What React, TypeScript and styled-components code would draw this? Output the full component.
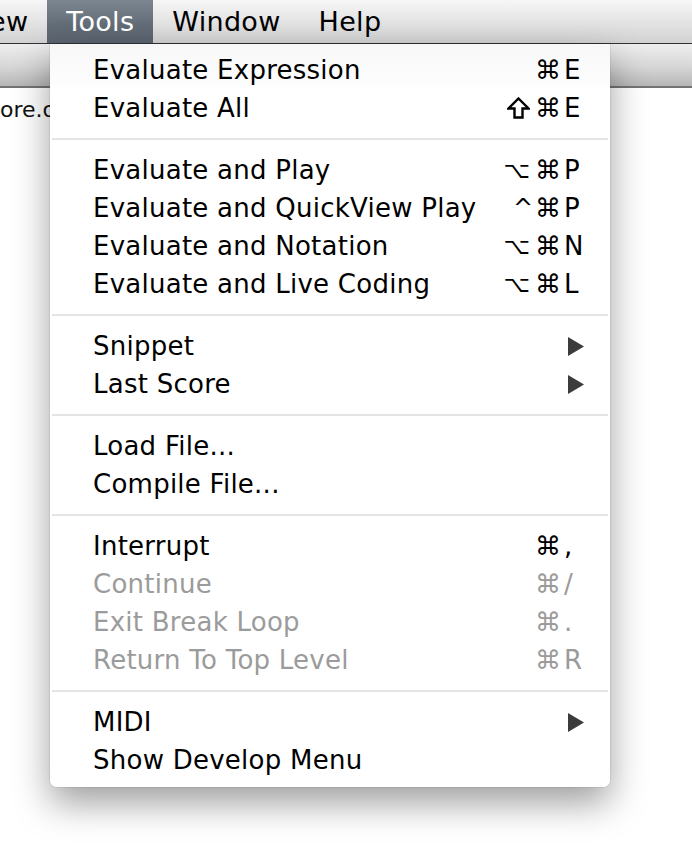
import React from "react";
import styled, { createGlobalStyle } from "styled-components";

const GlobalStyle = createGlobalStyle`
  html, body {
    margin: 0;
    padding: 0;
    background: #ffffff;
    overflow: hidden;
  }
  body {
    font-family: "DejaVu Sans", "Liberation Sans", sans-serif;
  }
`;

const Screen = styled.div`
  position: relative;
  width: 692px;
  height: 868px;
  overflow: hidden;
  background: #ffffff;
`;

const MenuBar = styled.div`
  display: flex;
  align-items: stretch;
  height: 43px;
  background: linear-gradient(#f6f6f6, #e4e4e4 50%, #d2d2d2);
  border-bottom: 1px solid #2f3338;
`;

const MenuTitle = styled.div<{ active?: boolean; first?: boolean }>`
  display: flex;
  align-items: center;
  padding: 0 19px 0 19px;
  margin-left: ${(p) => (p.first ? "-56px" : "0")};
  font-size: 27px;
  letter-spacing: 0.3px;
  color: ${(p) => (p.active ? "#ffffff" : "#000000")};
  background: ${(p) =>
    p.active ? "linear-gradient(#7c8690, #626c77 60%, #5a636e)" : "transparent"};
  white-space: nowrap;
`;

const Toolbar = styled.div`
  height: 42px;
  background: linear-gradient(#eeeeee, #d6d6d6 55%, #b6b6b6);
  border-bottom: 2px solid #737373;
`;

const Content = styled.div`
  padding: 9px 0 0 0;
  font-size: 22px;
  color: #111111;
  line-height: 26px;
`;

const Menu = styled.div`
  position: absolute;
  left: 50px;
  top: 44px;
  width: 560px;
  box-sizing: border-box;
  padding: 7px 0 8px;
  background: linear-gradient(#f8f8f8, #fdfdfd 42px, #ffffff 44px);
  border-radius: 0 0 7px 7px;
  box-shadow: 0 16px 36px rgba(0, 0, 0, 0.38), 0 0 0 1px rgba(0, 0, 0, 0.06);
`;

const Row = styled.div<{ disabled?: boolean }>`
  display: flex;
  align-items: center;
  height: 38px;
  padding: 0 24px 0 43px;
  font-size: 26px;
  color: ${(p) => (p.disabled ? "#9b9b9b" : "#000000")};
  white-space: nowrap;
`;

const Label = styled.span`
  flex: 1;
  letter-spacing: 0.25px;
`;

const Mods = styled.span`
  display: flex;
  align-items: center;
  gap: 5px;
  margin-right: 3px;
`;

const Key = styled.span`
  width: 22px;
  display: flex;
  align-items: center;
`;

const Separator = styled.div`
  height: 2px;
  margin: 11px 2px;
  background: #e4e4e4;
`;

const Option = styled.span`
  font-size: 23px;
`;

const Caret = styled.span`
  font-size: 24px;
  margin-right: -3px;
`;

const Arrow = () => (
  <svg width="16" height="19" viewBox="0 0 16 19" style={{ marginLeft: 4 }}>
    <polygon points="0,0 16,9.5 0,19" fill="#3c3c3c" />
  </svg>
);

// outline "shift" key symbol, wider than the font's own glyph
const ShiftSymbol = () => (
  <svg width="23" height="22" viewBox="0 0 23 22">
    <polygon
      points="11.5,1.5 21.5,11.5 15.5,11.5 15.5,20.5 7.5,20.5 7.5,11.5 1.5,11.5"
      fill="none"
      stroke="currentColor"
      strokeWidth="2.4"
      strokeLinejoin="miter"
    />
  </svg>
);

type Item = {
  label: string;
  mods?: string;
  keyChar?: string;
  submenu?: boolean;
  disabled?: boolean;
};

const groups: Item[][] = [
  [
    { label: "Evaluate Expression", mods: "⌘", keyChar: "E" },
    { label: "Evaluate All", mods: "⇧⌘", keyChar: "E" },
  ],
  [
    { label: "Evaluate and Play", mods: "⌥⌘", keyChar: "P" },
    { label: "Evaluate and QuickView Play", mods: "^⌘", keyChar: "P" },
    { label: "Evaluate and Notation", mods: "⌥⌘", keyChar: "N" },
    { label: "Evaluate and Live Coding", mods: "⌥⌘", keyChar: "L" },
  ],
  [
    { label: "Snippet", submenu: true },
    { label: "Last Score", submenu: true },
  ],
  [{ label: "Load File..." }, { label: "Compile File..." }],
  [
    { label: "Interrupt", mods: "⌘", keyChar: "," },
    { label: "Continue", mods: "⌘", keyChar: "/", disabled: true },
    { label: "Exit Break Loop", mods: "⌘", keyChar: ".", disabled: true },
    { label: "Return To Top Level", mods: "⌘", keyChar: "R", disabled: true },
  ],
  [{ label: "MIDI", submenu: true }, { label: "Show Develop Menu" }],
];

const renderMod = (m: string, i: number) => {
  if (m === "⇧") return <ShiftSymbol key={i} />;
  if (m === "^") return <Caret key={i}>^</Caret>;
  if (m === "⌥") return <Option key={i}>⌥</Option>;
  return <span key={i}>{m}</span>;
};

export default function App() {
  return (
    <Screen>
      <GlobalStyle />
      <MenuBar>
        <MenuTitle first>View</MenuTitle>
        <MenuTitle active>Tools</MenuTitle>
        <MenuTitle>Window</MenuTitle>
        <MenuTitle>Help</MenuTitle>
      </MenuBar>
      <Toolbar />
      <Content>ore.org</Content>

      <Menu>
        {groups.map((group, gi) => (
          <React.Fragment key={gi}>
            {gi > 0 && <Separator />}
            {group.map((item) => (
              <Row key={item.label} disabled={item.disabled}>
                <Label>{item.label}</Label>
                <Mods>{item.mods ? Array.from(item.mods).map(renderMod) : null}</Mods>
                <Key>{item.submenu ? <Arrow /> : item.keyChar}</Key>
              </Row>
            ))}
          </React.Fragment>
        ))}
      </Menu>
    </Screen>
  );
}
